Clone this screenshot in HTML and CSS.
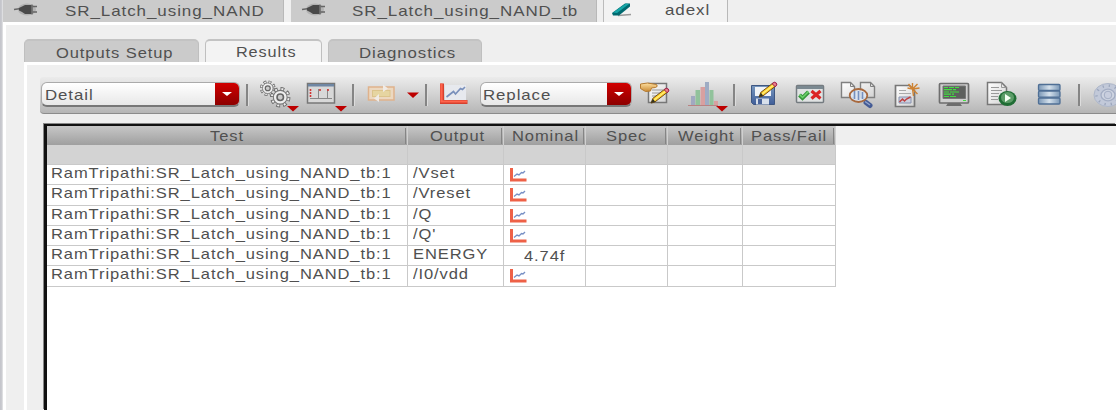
FILE: index.html
```
<!DOCTYPE html>
<html lang="en">
<head>
<meta charset="utf-8">
<title>adexl</title>
<link rel="stylesheet" href="styles.css">
</head>
<body>
<svg class="defs" aria-hidden="true">
  <defs>
    <linearGradient id="blue" x2="0" y2="1"><stop stop-color="#7898bf"/><stop offset="1" stop-color="#405e99"/></linearGradient>
    <linearGradient id="paper" x2="1" y2="1"><stop stop-color="#fff"/><stop offset="1" stop-color="#d2d2d2"/></linearGradient>
    <linearGradient id="hand" x2="0" y2="1"><stop stop-color="#ffe0a0"/><stop offset="1" stop-color="#c98a35"/></linearGradient>
    <linearGradient id="steel"><stop stop-color="#7a97b6"/><stop offset=".5" stop-color="#d5e1ec"/><stop offset="1" stop-color="#7a97b6"/></linearGradient>
    <symbol id="plug" viewBox="0 0 26 18">
      <ellipse cx="14" cy="9.500" rx="9" ry="6" fill="#999" opacity=".5"/>
      <path d="M1 9.500l7-1M19 6.500h5M19 12h5" stroke="#666" stroke-width="1.700"/>
      <path d="M6 8l4-2 2-1h7.500v9H12l-3-2-3-1.500z" fill="#4a4a4a"/>
      <path d="M19 4.500v10" stroke="#777" stroke-width="1.500"/>
    </symbol>
    <symbol id="plot" viewBox="0 0 20 16">
      <path d="M2.500 1v12h15" fill="none" stroke="#ee6147" stroke-width="3"/>
      <path d="M5 9.500l3-2.500 2 1 2.500-2.500 1.500 .5 2-2" fill="none" stroke="#7890c4" stroke-width="1.400"/>
    </symbol>
    <symbol id="gear" viewBox="-12 -12 24 24">
      <circle r="9.400" fill="none" stroke="#6c6c6c" stroke-width="4" stroke-dasharray="4.200 3.183"/>
      <circle r="9.200" fill="none" stroke="#efefef" stroke-width="2.400" stroke-dasharray="2.200 5.026" stroke-dashoffset="-1"/>
      <circle r="7.700" fill="#eee" stroke="#777" stroke-width="1.200"/>
      <circle r="3.600" fill="#ccc" stroke="#666" stroke-width="1.800"/>
    </symbol>
    <symbol id="pencil" viewBox="0 0 22 18">
      <path d="M2 17l2-5L17 2l3 3L6 16z" fill="#ffce29" stroke="#6a4312"/>
      <path d="M5 14L18 4" stroke="#fff07a" stroke-width="1.300"/>
      <path d="M2 17l2-4.500 2.500 3z" fill="#332"/>
      <path d="M16 3l2-1.800q3 .3 3 3L19 6z" fill="#e9818a" stroke="#914"/>
    </symbol>
  </defs>
</svg>
<div class="window">
  <nav class="tabs">
    <div class="tab tab-nand"><svg class="plug"><use href="#plug"/></svg><span class="text tab-label">SR_Latch_using_NAND</span></div>
    <div class="tab tab-tb"><svg class="plug"><use href="#plug"/></svg><span class="text tab-label">SR_Latch_using_NAND_tb</span></div>
    <div class="tab tab-adexl active"><svg class="eraser" viewBox="0 0 24 18"><path d="M7 15.500l13-1" stroke="#999" stroke-width="1.600"/><path d="M1 13L14 3.500h5v3L8 15.500H2z" fill="#006a70"/><path d="M2 12.500L15 3.500l3 .5L6 13z" fill="#16a6a7"/></svg><span class="text tab-label">adexl</span></div>
  </nav>
  <main class="view">
    <nav class="subtabs">
      <div class="subtab setup"><span class="text">Outputs Setup</span></div>
      <div class="subtab results active"><span class="text">Results</span></div>
      <div class="subtab diagnostics"><span class="text">Diagnostics</span></div>
    </nav>
    <section class="panel">
      <div class="toolbar">
        <div class="combo detail"><span class="text">Detail</span><i class="drop"></i></div>
        <i class="sep"></i>
        <svg width="42" viewBox="259 77 42 37"><use href="#gear" x="259.500" y="80" width="16.500" height="16.500"/><use href="#gear" x="269.500" y="86.500" width="21.500" height="21.500"/><path d="M287 106h12l-6 5.500z" fill="#bd0000"/></svg>
        <svg width="44" viewBox="305 77 44 37"><path d="M307.500 83.500h27v19.500h-27z" fill="#d8d8d8" stroke="#777" stroke-width="1.500"/><path d="M308 84h26v2.500h-26z" fill="#6f87a4"/><path d="M310 98.500h22M318.500 89v9M327.500 89v9" stroke="#888"/><path d="M310.500 89v2m0 1v2m0 1v2M320 89v2m8-2v2" stroke="#d03434" stroke-width="1.600"/><path d="M335 106h12l-6 5.500z" fill="#bd0000"/></svg>
        <i class="sep"></i>
        <svg width="32" viewBox="367 77 32 37"><rect x="368.500" y="87" width="25.500" height="13" fill="#ecd8c0" stroke="#dfb28c" stroke-width="1.500"/><rect x="372.500" y="90.500" width="17.500" height="6" fill="#e6d5a1" stroke="#dcc48c"/><path d="M383 86.500v-2l5 4-5 3.500M379 95v-1l-5 4.500 5 3.500z" fill="#f0ebe6"/></svg>
        <svg width="16" viewBox="406 77 16 37"><path d="M407 92.500h12l-6 5.500z" fill="#bd0000"/></svg>
        <i class="sep"></i>
        <svg width="34" viewBox="438 77 34 37"><path d="M445 85h21v15h-21z" fill="#e7e9ee"/><path d="M442 83.500V102h25.500" fill="none" stroke="#d6402e" stroke-width="4"/><path d="M441.500 83.500V101.500h25.500" fill="none" stroke="#ff644c" stroke-width="2.200"/><path d="M446.500 97l7-5.500 2 2.500 5-5.500 2 1 2.500-2.500" fill="none" stroke="#7a90bb" stroke-width="1.700"/></svg>
        <div class="combo replace"><span class="text">Replace</span><i class="drop"></i></div>
        <svg width="34" viewBox="640 77 34 37"><path d="M648.500 83.500h18v19h-18z" fill="url(#paper)" stroke="#777" stroke-width="1.500"/><path d="M652 90h11m-11 3h8m-8 3h6" stroke="#999"/><path d="M640.500 84l7-1 9 1.500q2 2-1 3l-4 .5-1 3-5 .5-5-3z" fill="url(#hand)" stroke="#b47a30"/><use href="#pencil" x="649" y="87" width="21" height="17"/></svg>
        <svg width="42" viewBox="687 77 42 37"><path d="M691 96h4v9h-4z" fill="#a1a9c1"/><path d="M695.500 90h4.500v15h-4.500zM709.500 90h4v15h-4z" fill="#91c29b"/><path d="M700.500 87h4.500v18h-4.500zM714 101h4v4h-4z" fill="#d8a0a0"/><path d="M705 82h4v23h-4z" fill="#9eacc4"/><path d="M688 105.500h30" stroke="#b98282"/><path d="M716 106h12l-6 5.500z" fill="#bd0000"/></svg>
        <i class="sep"></i>
        <svg width="30" viewBox="750 77 30 37"><path d="M751.500 85.500h23v19h-21l-2-2z" fill="url(#blue)" stroke="#3e5782"/><path d="M755 87h16v9h-16z" fill="#f0f3f7"/><path d="M756 98.500h13v6h-13z" fill="#d8e0eb"/><path d="M758 99h4v5h-4z" fill="#4a649a"/><use href="#pencil" x="757" y="81" width="21" height="17"/></svg>
        <svg width="32" viewBox="795 77 32 37"><rect x="796.500" y="85.500" width="27" height="17" rx="1" fill="#e0e3e3" stroke="#747b80" stroke-width="1.500"/><path d="M797 86h26v3h-26z" fill="#7b8991"/><path d="M799.500 95l3 3 6-6" fill="none" stroke="#37963c" stroke-width="4"/><path d="M799.500 94.500l3 3 6-6" fill="none" stroke="#6ed36c" stroke-width="1.500"/><path d="M811.500 91l9 7.500m0-7.500l-9 7.500" stroke="#db2525" stroke-width="3.200"/></svg>
        <svg width="40" viewBox="839 77 40 37"><path d="M841.500 82.500h9l4 4v11h-13zM860.500 82.500h10l4 4v11h-14z" fill="url(#paper)" stroke="#808080" stroke-width="1.400"/><path d="M850.500 82.500v4h4M870.500 82.500v4h4" fill="none" stroke="#808080"/><path d="M866 102.500l4 3" stroke="#445b95" stroke-width="5" stroke-linecap="round"/><path d="M865 101.500l5 3.500" stroke="#91a4cc" stroke-width="1.500"/><ellipse cx="858.500" cy="95.500" rx="8.800" ry="6.500" fill="#dde8f4" fill-opacity=".86" stroke="#a8693e" stroke-width="1.800"/><path d="M854.500 91v8m4-8v9m4-8v7" stroke="#7690be" stroke-width="1.600"/></svg>
        <svg width="30" viewBox="893 77 30 37"><path d="M895.500 85.500h14l5 5v16h-19z" fill="url(#paper)" stroke="#777" stroke-width="1.700"/><path d="M899 90.500h7m-7 3h12" stroke="#aaa"/><path d="M899 97h12v6h-12z" fill="#cbd0df" stroke="#8792af"/><path d="M899.500 102l3-3 2 2 2-2 4-2" stroke="#bf4141" stroke-width="1.500" fill="none"/><path d="M912.500 89l-5-1m5 1l-4-5m4 5v-6m0 6l5-5m-5 5l7-1m-7 1l5 5m-5-5l1 7" stroke="#ce8232" stroke-width="1.400"/></svg>
        <svg width="34" viewBox="938 77 34 37"><path d="M948 103h12l2 3h-16z" fill="#6d6d6d"/><rect x="939.500" y="83.500" width="29" height="19.500" rx="1" fill="#cfcfcf" stroke="#6e6e6e" stroke-width="1.700"/><path d="M943 86h22.500v12.500H943z" fill="#5e605e" stroke="#777"/><path d="M944 87.500h4m1 0h5m1 0h4M944 89.700h8m1 0h3M944 92h5m1 0h9M944 94.200h7m1 0h2M944 96.500h5m1 0h6M963 100.500h3" stroke="#42df41" stroke-width="1.200"/></svg>
        <svg width="34" viewBox="986 77 34 37"><path d="M987.500 82.500h14l5 5v17h-19z" fill="url(#paper)" stroke="#777" stroke-width="1.500"/><path d="M1001.500 82.500v5h5M991 87.500h8m-8 3h11m-11 3h8m-8 3h7m-7 3h7" fill="none" stroke="#999"/><ellipse cx="1007.500" cy="98.500" rx="9" ry="7.500" fill="#206d35"/><ellipse cx="1007.500" cy="97.500" rx="6.500" ry="5.500" fill="#5c9c68"/><path d="M1005 94v8l6-4z" fill="#f5fff3"/></svg>
        <svg width="26" viewBox="1037 77 26 37"><rect x="1038.500" y="84.500" width="21.500" height="6" rx="1" fill="url(#steel)" stroke="#4f6f95" stroke-width="1.300"/><rect x="1038.500" y="91.200" width="21.500" height="6" rx="1" fill="url(#steel)" stroke="#4f6f95" stroke-width="1.300"/><rect x="1038.500" y="98" width="21.500" height="6" rx="1" fill="url(#steel)" stroke="#4f6f95" stroke-width="1.300"/></svg>
        <i class="sep"></i>
        <svg width="24" viewBox="1092 77 24 37"><ellipse cx="1108" cy="95" rx="14" ry="11.500" fill="#c2c9d9" stroke="#aeb7c9"/><ellipse cx="1108" cy="95" rx="11.500" ry="9.300" fill="none" stroke="#9aa5bb" stroke-width="2.500" stroke-dasharray="1.200 5"/><ellipse cx="1108" cy="95" rx="7" ry="5.800" fill="#ced4e1" stroke="#a4aec4" stroke-width="1.300"/><circle cx="1108" cy="95" r="3.800" fill="#c8cede" stroke="#a4aec4"/></svg>
      </div>
      <div class="results-area">
        <div class="grid head"><div class="h-test"><span class="text">Test</span></div><div class="h-output"><span class="text">Output</span></div><div class="h-nominal"><span class="text">Nominal</span></div><div class="h-spec"><span class="text">Spec</span></div><div class="h-weight"><span class="text">Weight</span></div><div class="h-pass"><span class="text">Pass/Fail</span></div></div>
        <div class="grid blank"><div></div><div></div><div></div><div></div><div></div><div></div></div>
        <div class="grid row"><div><span class="text">RamTripathi:SR_Latch_using_NAND_tb:1</span></div><div><span class="text">/Vset</span></div><div><svg class="plot"><use href="#plot"/></svg></div><div></div><div></div><div></div></div>
        <div class="grid row"><div><span class="text">RamTripathi:SR_Latch_using_NAND_tb:1</span></div><div><span class="text">/Vreset</span></div><div><svg class="plot"><use href="#plot"/></svg></div><div></div><div></div><div></div></div>
        <div class="grid row"><div><span class="text">RamTripathi:SR_Latch_using_NAND_tb:1</span></div><div><span class="text">/Q</span></div><div><svg class="plot"><use href="#plot"/></svg></div><div></div><div></div><div></div></div>
        <div class="grid row"><div><span class="text">RamTripathi:SR_Latch_using_NAND_tb:1</span></div><div><span class="text">/Q'</span></div><div><svg class="plot"><use href="#plot"/></svg></div><div></div><div></div><div></div></div>
        <div class="grid row"><div><span class="text">RamTripathi:SR_Latch_using_NAND_tb:1</span></div><div><span class="text">ENERGY</span></div><div class="value"><span class="text">4.74f</span></div><div></div><div></div><div></div></div>
        <div class="grid row"><div><span class="text">RamTripathi:SR_Latch_using_NAND_tb:1</span></div><div><span class="text">/I0/vdd</span></div><div><svg class="plot"><use href="#plot"/></svg></div><div></div><div></div><div></div></div>
      </div>
    </section>
  </main>
</div>
</body>
</html>
```
FILE: styles.css
```
* { box-sizing: border-box; }
body { margin: 0; overflow: hidden; background: #efefef; font: 14.5px/20px "Liberation Sans", Arial, sans-serif; color: #505050; }
svg { display: block; flex: none; }
.defs { position: absolute; width: 0; height: 0; }
.window { width: 1116px; height: 410px; padding-left: 3px; background: linear-gradient(90deg, #c3c4ca 0, #cccdd2 2px, #efefef 3px); }
.text { display: inline-block; white-space: pre; transform: scaleX(1.139); transform-origin: left center; letter-spacing: .8px; }
.tabs { display: flex; height: 22px; }
.tab { display: flex; height: 22px; background: #cbcbcb; border-right: 1px solid #b8b8b8; }
.tab-nand { width: 281px; margin-right: 7px; }
.tab-tb { width: 306px; margin-right: 6px; }
.tab-adexl { width: 125px; border-left: 1px solid #bbb; }
.tab .text { line-height: 22px; transform: scaleX(1.17); }
.plug { width: 26px; height: 18px; margin: 0 26px 0 10px; }
.tab-tb .plug { margin-right: 25px; }
.eraser { width: 24px; height: 18px; margin: 0 30px 0 7px; }
.tab.active { background: #f2f2f2; }
.tab.active .text { line-height: 20px; }
.view { height: 388px; padding: 14px 0 0 18px; border-top: 3px solid #fff; border-left: 3px solid #fff; background: #efefef; }
.subtabs { display: flex; height: 23px; gap: 6px; }
.subtab { height: 23px; padding-top: 2px; background: #cbcbcb; border: 1px solid #bfbfbf; border-top: 2px solid #c3c3c3; border-bottom: 0; border-radius: 5px 5px 0 0; }
.setup { width: 175px; padding-left: 31px; }
.results { width: 117px; padding-left: 30px; }
.results .text { transform: scaleX(1.12); }
.diagnostics { width: 154px; padding-left: 30px; }
.diagnostics .text { transform: scaleX(1.16); }
.subtab.active { background: #f3f3f3; padding-top: 1px; }
.panel { height: 348px; padding: 12px 0 0 13px; border-top: 3px solid #fff; border-left: 3px solid #fff; }
.toolbar { display: grid; grid-template-columns: 205px 13px 46px 47px 15px 39px 19px 13px 42px 160px 47px 46px 17px 45px 44px 54px 45px 48px 51px 41px 14px 24px; height: 37px; padding-left: 1px; background: linear-gradient(#ebebeb, #d4d4d4 45%, #b6b6b6); border-bottom: 1px solid #8c8c8c; border-radius: 3px 0 0 4px; }
.toolbar svg { height: 37px; }
.sep { width: 3px; height: 22px; margin-top: 7px; border-left: 2px solid #858585; border-right: 1px solid #ddd; }
.combo { display: flex; justify-content: space-between; width: 199px; height: 25px; margin-top: 5px; padding-left: 3px; border: 1px solid #aaa; border-bottom: 2px solid #777; border-radius: 6px; overflow: hidden; background: linear-gradient(#fff, #e8e8e8); }
.combo.replace { width: 152px; padding-left: 2px; }
.combo .text { line-height: 24px; transform: scaleX(1.16); }
.drop { display: grid; place-items: center; width: 24px; background: linear-gradient(#d10000, #8d0000); }
.drop::after { content: ""; border: 5px solid transparent; border-top: 4px solid #fff; border-bottom: 0; }
.results-area { height: 286px; margin: 10px 0 0 4px; border-top: 2px solid #111; border-left: 3px solid #111; background: linear-gradient(#efefef 19px, #fff 19px); box-shadow: -1px -1px #888; }
.grid { display: grid; grid-template-columns: 361px 96px 82px 82px 75px 93px; width: 789px; }
.grid > div { border-right: 1px solid #c9c9c9; }
.head { height: 19px; background: linear-gradient(#c7c7c7, #9f9f9f); }
.head > div { border-right: 1px solid #d0d0d0; background: linear-gradient(#858585, #858585) right 1px top 2px / 1px 16px no-repeat; }
.head .text { line-height: 17px; }
.h-test { padding-left: 163px; }
.h-output { padding-left: 22px; }
.h-nominal { padding-left: 8px; }
.h-spec { padding-left: 20px; }
.h-weight { padding-left: 10px; }
.h-pass { padding-left: 8px; }
.blank { height: 20px; background: #d3d3d3; border-bottom: 1px solid #c9c9c9; }
.row { height: 20.25px; border-bottom: 1px solid #c9c9c9; }
.row > div { height: 19.25px; padding-left: 5px; }
.row > div:first-child { padding-left: 4px; }
.row .text { line-height: 17px; vertical-align: top; }
.row .value { padding-left: 20px; }
.row .value .text { line-height: 20px; }
.plot { width: 20px; height: 16px; margin-top: 2px; }
```
